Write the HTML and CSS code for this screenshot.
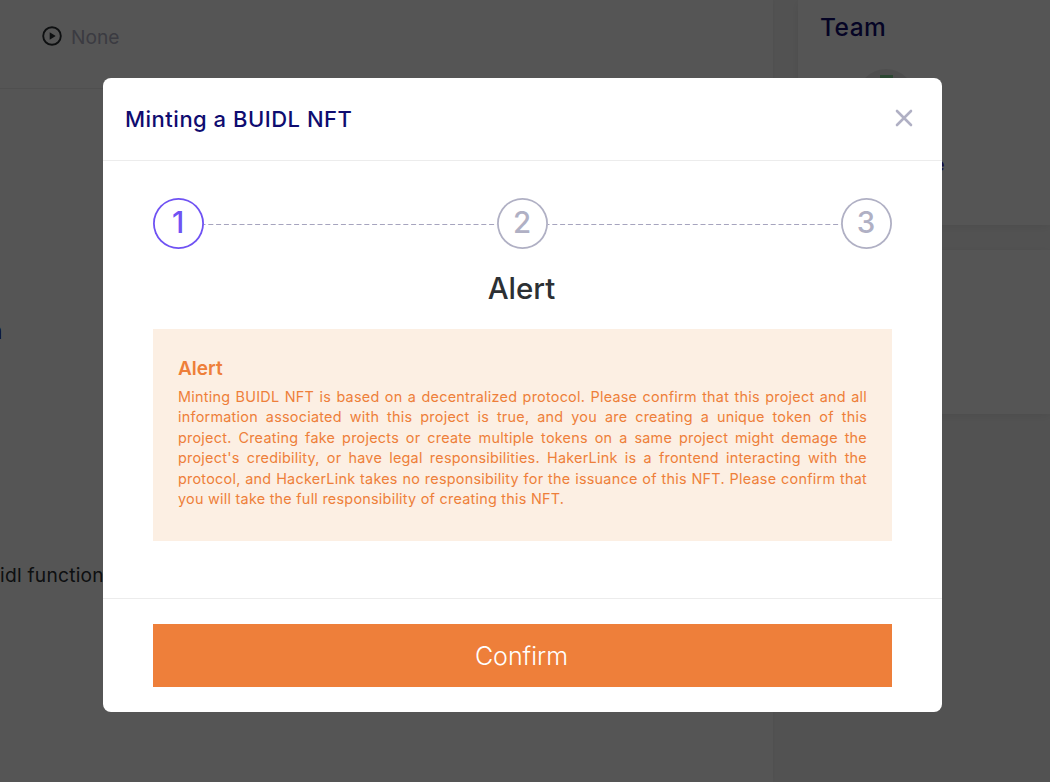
FILE: index.html
```html
<!DOCTYPE html>
<html lang="en">

<head>
    <meta charset="UTF-8">
    <meta name="viewport" content="width=device-width, initial-scale=1.0">
    <title>Minting a BUIDL NFT</title>
    <link rel="stylesheet" href="styles.css">
</head>

<body>

    <div class="page">
        <div class="main-column">
            <div class="demo-row">
                <svg class="play-icon" viewBox="0 0 20 20">
                    <circle cx="10" cy="10" r="8.8" fill="none" stroke="#2c3033" stroke-width="1.9" />
                    <path d="M7.7 6.2v7.6l6-3.8z" fill="#2c3033" />
                </svg>
                <span>None</span>
            </div>
            <div class="description">
                <h2>n</h2>
                <p>idl function</p>
            </div>
        </div>

        <div class="side-column">
            <div class="card team">
                <h3>Team</h3>
                <div class="avatar"><span></span></div>
                <div class="member">e</div>
            </div>
            <div class="card"></div>
        </div>
    </div>

    <div class="overlay">
        <div class="modal">
            <div class="modal-header">
                <h3>Minting a BUIDL NFT</h3>
                <button class="close" aria-label="Close">
                    <svg viewBox="0 0 18 18">
                        <path d="M2 2l14 14M16 2L2 16" fill="none" stroke="#b0b0c4" stroke-width="2.6" stroke-linecap="round" />
                    </svg>
                </button>
            </div>

            <div class="modal-body">
                <div class="steps">
                    <div class="step active">1</div>
                    <svg class="line"><path d="M0 .5h295" /></svg>
                    <div class="step">2</div>
                    <svg class="line"><path d="M0 .5h295" /></svg>
                    <div class="step">3</div>
                </div>
                <h2>Alert</h2>
                <div class="alert">
                    <h4>Alert</h4>
                    <p>Minting BUIDL NFT is based on a decentralized protocol. Please confirm that this project and all
                        information associated with this project is true, and you are creating a unique token of this
                        project. Creating fake projects or create multiple tokens on a same project might demage the
                        project's credibility, or have legal responsibilities. HakerLink is a frontend interacting with
                        the protocol, and HackerLink takes no responsibility for the issuance of this NFT. Please confirm
                        that you will take the full responsibility of creating this NFT.</p>
                </div>
            </div>

            <div class="modal-footer">
                <button class="confirm">Confirm</button>
            </div>
        </div>
    </div>

</body>

</html>
```
FILE: styles.css
```css
* {
    box-sizing: border-box;
}

body {
    margin: 0;
    height: 782px;
    overflow: hidden;
    font-family: Inter, "Liberation Sans", sans-serif;
    color: #2c3033;
}

h2, h3, h4, p {
    margin: 0;
}

button {
    border: none;
    font-family: inherit;
    cursor: pointer;
}

.page {
    display: flex;
    gap: 25px;
    height: 782px;
    background: #f7f7f7;
}

.main-column {
    width: 773px;
    background: #fff;
    box-shadow: 0 0 5px rgba(0, 0, 0, 0.06);
}

.demo-row {
    display: flex;
    align-items: center;
    gap: 9px;
    height: 89px;
    padding: 0 0 14px 42px;
    border-bottom: 1px solid #eee;
    font-size: 19.2px;
    color: #b0b0c4;
}

.play-icon {
    width: 20px;
    height: 20px;
    margin-top: -3px;
}

.description h2 {
    margin: 227px 0 0 -12px;
    font-size: 24px;
    font-weight: 500;
    line-height: 30px;
    color: #0f0c70;
}

.description p {
    margin-top: 214px;
    font-size: 19.2px;
    line-height: 30px;
    letter-spacing: 0.25px;
}

.side-column {
    display: flex;
    flex-direction: column;
    gap: 25px;
    width: 252px;
}

.card {
    height: 164px;
    background: #fff;
    box-shadow: 0 2px 9px rgba(0, 0, 0, 0.08);
}

.card.team {
    height: 225px;
    padding: 11px 22px;
}

.team h3 {
    font-size: 24.5px;
    font-weight: 500;
    line-height: 33px;
    letter-spacing: 0.5px;
    color: #0f0c70;
}

.avatar {
    display: flex;
    justify-content: center;
    width: 58px;
    height: 58px;
    margin: 25px 0 0 37px;
    padding-top: 6px;
    border-radius: 50%;
    background: #ebebeb;
}

.avatar span {
    width: 13px;
    height: 13px;
    background: #85d695;
}

.member {
    margin: 28px 0 0 114px;
    font-size: 18px;
    font-weight: 500;
    line-height: 20px;
    color: #3a20c0;
}

.overlay {
    position: fixed;
    inset: 0;
    display: flex;
    justify-content: center;
    align-items: flex-start;
    padding: 78px 5px 0 0;
    background: rgba(0, 0, 0, 0.667);
}

.modal {
    width: 839px;
    height: 634px;
    background: #fff;
    border-radius: 8px;
}

.modal-header {
    display: flex;
    justify-content: space-between;
    align-items: center;
    height: 83px;
    padding: 0 29px 0 22px;
    border-bottom: 1px solid #ececec;
}

.modal-header h3 {
    font-size: 22px;
    font-weight: 500;
    letter-spacing: 0.5px;
    color: #0f0c70;
}

.close {
    width: 18px;
    height: 18px;
    margin-bottom: 2px;
    padding: 0;
    background: none;
}

.close svg {
    display: block;
}

.modal-body {
    height: 437px;
    padding: 37px 50px 0;
}

.steps {
    display: flex;
    align-items: center;
}

.step {
    display: flex;
    justify-content: center;
    align-items: center;
    width: 51px;
    height: 51px;
    padding: 0 1px 3px 0;
    border-radius: 50%;
    box-shadow: inset 0 0 0 1.8px #b0b0c4;
    font-size: 29.5px;
    font-weight: 500;
    color: #b0b0c4;
}

.step.active {
    box-shadow: inset 0 0 0 1.8px #6f52f3;
    color: #6f52f3;
}

.line {
    flex: 1;
    height: 1px;
    margin-top: 1px;
}

.line path {
    stroke: #a6a4be;
    stroke-width: 1.3;
    stroke-dasharray: 5 2.8;
    stroke-dashoffset: 3.5;
}

.modal-body h2 {
    margin-top: 19px;
    padding-right: 2px;
    font-size: 29.5px;
    font-weight: 500;
    line-height: 40px;
    text-align: center;
}

.alert {
    height: 212px;
    margin-top: 21px;
    padding: 28px 25px;
    background: #fcefe3;
    color: #ee7f3a;
}

.alert h4 {
    font-size: 19px;
    font-weight: 600;
    line-height: 24px;
}

.alert p {
    margin-top: 6px;
    font-size: 14.4px;
    line-height: 20.4px;
    letter-spacing: 0.25px;
    text-align: justify;
}

.modal-footer {
    padding: 25px 50px;
    border-top: 1px solid #ececec;
}

.confirm {
    display: block;
    width: 100%;
    height: 63px;
    padding: 0 2px 0 0;
    background: #ee7f3a;
    color: #fff;
    font-size: 25px;
    font-weight: 300;
}
```
